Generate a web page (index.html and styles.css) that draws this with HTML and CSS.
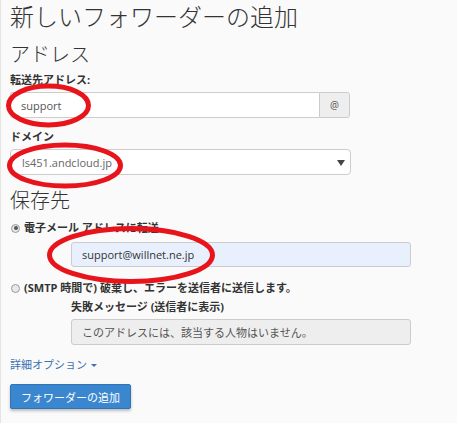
FILE: index.html
```html
<!DOCTYPE html>
<html lang="ja">
<head>
<meta charset="utf-8">
<title>新しいフォワーダーの追加</title>
<link rel="stylesheet" href="styles.css">
</head>
<body>
<div class="page">
  <h1 class="title">新しいフォワーダーの追加</h1>
  <h2 class="section first">アドレス</h2>
  <div class="lbl">転送先アドレス:</div>
  <div class="input-group">
    <div class="input">support</div>
    <span class="addon">@</span>
  </div>
  <div class="lbl lbl-domain">ドメイン</div>
  <div class="select">ls451.andcloud.jp<span class="caret"></span></div>
  <h2 class="section second">保存先</h2>
  <div class="radio-row row1"><span class="radio checked"></span><span class="rlabel">電子メール アドレスに転送</span></div>
  <div class="indent"><div class="input autofill">support@willnet.ne.jp</div></div>
  <div class="radio-row row2"><span class="radio"></span><span class="rlabel">(SMTP 時間で) 破棄し、エラーを送信者に送信します。</span></div>
  <div class="indent">
    <div class="lbl lbl-fail">失敗メッセージ (送信者に表示)</div>
    <div class="input disabled">このアドレスには、該当する人物はいません。</div>
  </div>
  <a class="more">詳細オプション <span class="more-caret"></span></a>
  <button class="btn">フォワーダーの追加</button>
  <svg class="marks" width="457" height="423" viewBox="0 0 457 423">
    <ellipse cx="48.5" cy="105.5" rx="40" ry="19.5"/>
    <ellipse cx="65" cy="165.5" rx="55.5" ry="20.5"/>
    <ellipse cx="131" cy="255" rx="81.5" ry="26.5"/>
  </svg>
</div>
</body>
</html>
```
FILE: styles.css
```css
html, body {
  margin: 0;
  padding: 0;
  background: #fafafa;
}
body {
  font-family: "Open Sans", "Noto Sans CJK JP", sans-serif;
  color: #333;
  font-size: 11px;
}
.page {
  position: relative;
  width: 457px;
  height: 423px;
  box-sizing: border-box;
  border-left: 1px solid #e4e4e4;
  padding: 2px 0 0 9px;
  display: flex;
  flex-direction: column;
  align-items: flex-start;
  overflow: hidden;
}
.title {
  margin: 0;
  font-size: 24px;
  line-height: 30px;
  font-weight: 300;
  color: #333;
}
.section {
  margin: 10px 0 0;
  font-size: 20px;
  line-height: 26px;
  font-weight: 300;
  color: #333;
}
.section.second { margin-top: 13px; }
.lbl {
  margin-top: 4px;
  font-weight: bold;
  line-height: 16px;
  font-size: 11px;
}
.lbl-domain { margin-top: 11px; }
.lbl-fail { margin-top: 3px; }
.input-group {
  margin-top: 4px;
  display: flex;
  width: 340px;
  height: 26px;
}
.input {
  flex: 1;
  box-sizing: border-box;
  height: 26px;
  border: 1px solid #ccc;
  background: #fff;
  color: #555;
  padding: 0 10px;
  display: flex;
  align-items: center;
  font-size: 11px;
}
.input-group .input {
  border-radius: 3px 0 0 3px;
  border-right: none;
}
.addon {
  width: 31px;
  box-sizing: border-box;
  border: 1px solid #ccc;
  border-radius: 0 3px 3px 0;
  background: #eee;
  color: #555;
  display: flex;
  align-items: center;
  justify-content: center;
  font-size: 10px;
}
.select {
  margin-top: 4px;
  position: relative;
  width: 341px;
  height: 26px;
  box-sizing: border-box;
  border: 1px solid #ccc;
  border-radius: 4px;
  background: #fff;
  color: #666;
  padding: 0 11px;
  display: flex;
  align-items: center;
}
.caret {
  position: absolute;
  right: 5px;
  top: 10px;
  width: 0;
  height: 0;
  border-left: 4px solid transparent;
  border-right: 4px solid transparent;
  border-top: 6px solid #444;
}
.radio-row {
  display: flex;
  align-items: center;
  line-height: 16px;
  font-weight: bold;
}
.row1 { margin-top: 6px; }
.row2 { margin-top: 13px; }
.radio {
  width: 9px;
  height: 9px;
  box-sizing: border-box;
  border-radius: 50%;
  border: 1px solid #9a9a9a;
  background: #e8e8e8;
  margin: 0 4px 0 1px;
  position: relative;
}
.radio.checked::after {
  content: "";
  position: absolute;
  left: 1.5px;
  top: 1.5px;
  width: 4px;
  height: 4px;
  border-radius: 50%;
  background: #555;
}
.indent {
  margin-left: 61px;
  display: flex;
  flex-direction: column;
  align-items: flex-start;
}
.indent .input {
  width: 340px;
  flex: none;
  border-radius: 3px;
}
.input.autofill {
  margin-top: 6px;
  height: 25px;
  background: #e8f0fe;
  color: #333;
  padding-left: 10px;
}
.input.disabled {
  margin-top: 4px;
  background: #eee;
  color: #555;
}
.more {
  margin-top: 12px;
  line-height: 16px;
  color: #3a72b0;
  display: flex;
  align-items: center;
}
.more-caret {
  margin-left: 4px;
  width: 0;
  height: 0;
  border-left: 3px solid transparent;
  border-right: 3px solid transparent;
  border-top: 3px solid #3a72b0;
}
.btn {
  margin-top: 11px;
  height: 25px;
  padding: 0 10px;
  border: 1px solid #2f74b8;
  border-radius: 2px;
  background: #3b87cf;
  color: #fff;
  font-family: inherit;
  font-size: 11px;
  box-shadow: 0 2px 3px rgba(0,0,0,0.25);
}
.marks {
  position: absolute;
  left: -1px;
  top: 0;
  pointer-events: none;
}
.marks ellipse {
  fill: none;
  stroke: #e8141c;
  stroke-width: 5;
}
```
